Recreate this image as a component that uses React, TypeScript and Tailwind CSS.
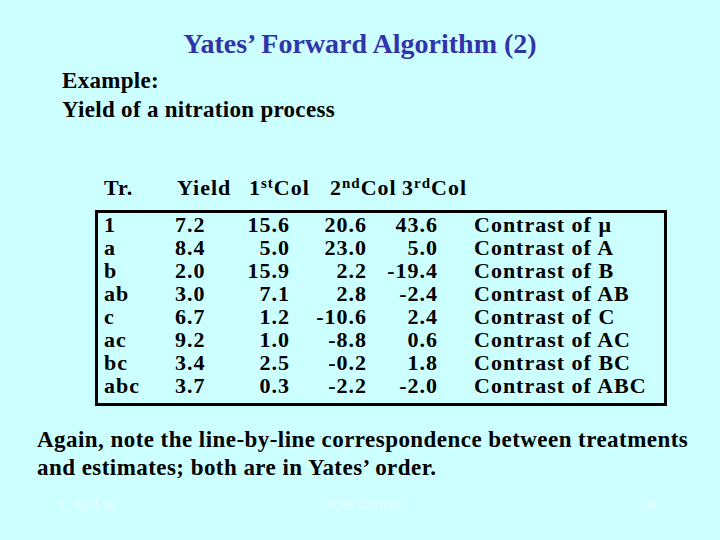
import React from 'react';

const rows = [
  ['1', '7.2', '15.6', '20.6', '43.6', 'Contrast of μ'],
  ['a', '8.4', '5.0', '23.0', '5.0', 'Contrast of A'],
  ['b', '2.0', '15.9', '2.2', '-19.4', 'Contrast of B'],
  ['ab', '3.0', '7.1', '2.8', '-2.4', 'Contrast of AB'],
  ['c', '6.7', '1.2', '-10.6', '2.4', 'Contrast of C'],
  ['ac', '9.2', '1.0', '-8.8', '0.6', 'Contrast of AC'],
  ['bc', '3.4', '2.5', '-0.2', '1.8', 'Contrast of BC'],
  ['abc', '3.7', '0.3', '-2.2', '-2.0', 'Contrast of ABC'],
];

const App = () => {
  return (
    <div
      className="w-[720px] h-[540px] bg-[#ccffff] flex flex-col font-bold text-black overflow-hidden"
      style={{ fontFamily: '"Liberation Serif", "Times New Roman", serif' }}
    >
      {/* Title */}
      <h1 className="text-center text-[28px] leading-[32px] text-[#3333aa] mt-[28px]">
        Yates’ Forward Algorithm (2)
      </h1>

      {/* Intro lines */}
      <div className="ml-[62px] mt-[6px] text-[23px] leading-[29px] tracking-[0.3px]">
        <p>Example:</p>
        <p>Yield of a nitration process</p>
      </div>

      {/* Column headings */}
      <div className="flex ml-[104px] mt-[52px] text-[22px] leading-[24px] tracking-[1px]">
        <span className="w-[73px]">Tr.</span>
        <span className="w-[72px]">Yield</span>
        <span className="w-[81px]">
          1<sup className="text-[15px]">st</sup>Col
        </span>
        <span className="w-[72px]">
          2<sup className="text-[15px]">nd</sup>Col
        </span>
        <span>
          3<sup className="text-[15px]">rd</sup>Col
        </span>
      </div>

      {/* Boxed table */}
      <div className="ml-[95px] mt-[10px] w-[572px] border-[3px] border-black pl-[6px] pb-[6px] text-[22px] leading-[23px] tracking-[1px]">
        {rows.map((r) => (
          <div key={r[0]} className="flex">
            <span className="w-[71px]">{r[0]}</span>
            <span className="w-[72px]">{r[1]}</span>
            <span className="w-[43px] text-right whitespace-nowrap">{r[2]}</span>
            <span className="w-[77px] text-right whitespace-nowrap">{r[3]}</span>
            <span className="w-[71px] text-right whitespace-nowrap">{r[4]}</span>
            <span className="ml-[36px] whitespace-nowrap">{r[5]}</span>
          </div>
        ))}
      </div>

      {/* Closing note */}
      <p className="ml-[37px] mt-[20px] text-[23px] leading-[28px] tracking-[0.45px] whitespace-nowrap">
        Again, note the line-by-line correspondence between treatments
        <br />
        and estimates; both are in Yates’ order.
      </p>

      {/* Footer */}
      <div
        className="flex mt-[13px] text-[14px] leading-[20px] font-normal text-[#e8ffff]"
        style={{ fontFamily: '"Liberation Sans", Arial, sans-serif' }}
      >
        <span className="ml-[60px] w-[263px]">L. M. Lye</span>
        <span className="w-[317px]">DOE Course</span>
        <span>38</span>
      </div>
    </div>
  );
};

export default App;
